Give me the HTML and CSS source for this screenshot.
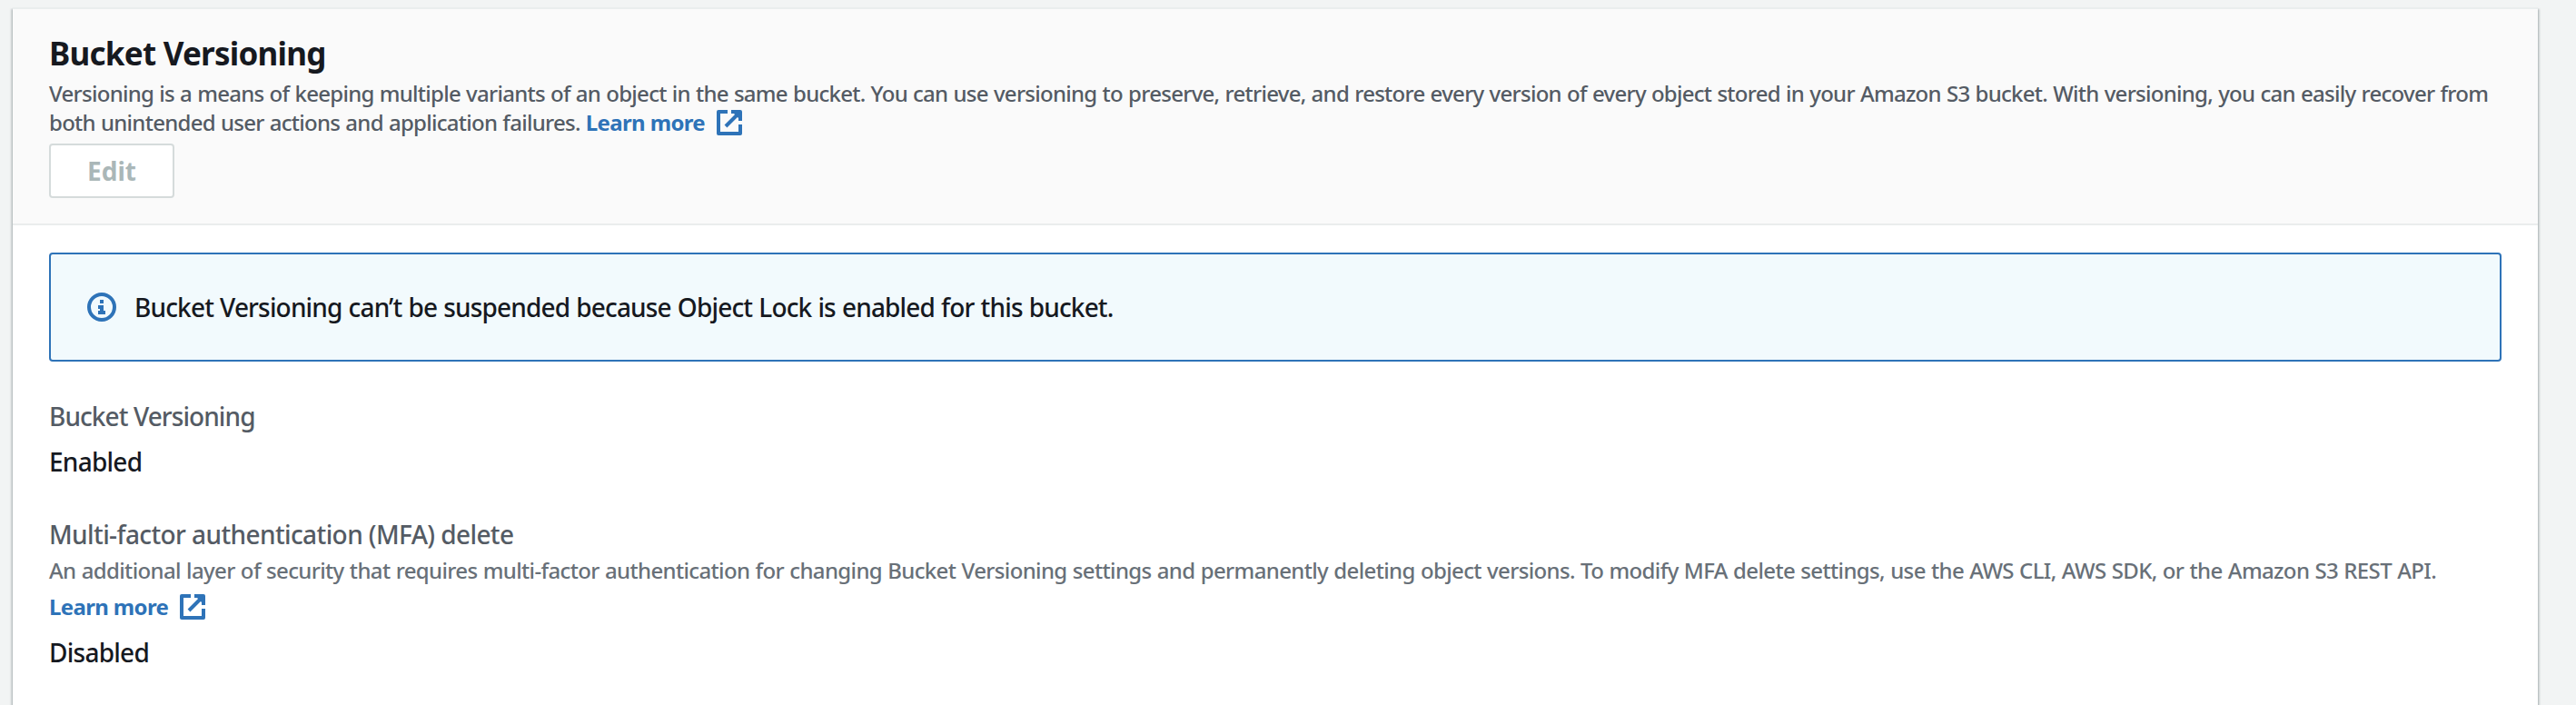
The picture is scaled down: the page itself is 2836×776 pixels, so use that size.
FILE: index.html
```html
<!DOCTYPE html>
<html lang="en">
<head>
<meta charset="utf-8">
<title>Bucket Versioning</title>
<link rel="stylesheet" href="styles.css">
</head>
<body>
<main class="panel">
  <header class="panel-header">
    <h2 class="title">Bucket Versioning</h2>
    <p class="description">Versioning is a means of keeping multiple variants of an object in the same bucket. You can use versioning to preserve, retrieve, and restore every version of every object stored in your Amazon S3 bucket. With versioning, you can easily recover from<br>both unintended user actions and application failures. <a class="link">Learn more<svg class="external" viewBox="0 0 28 28"><path d="M12 2H2V26H26V16"/><path d="M16 2H26V12M24 4L10 18"/><path class="head" d="M18 3h7v7z"/></svg></a></p>
    <button class="edit" disabled>Edit</button>
  </header>
  <section class="content">
    <div class="alert">
      <svg class="info" viewBox="0 0 32 32"><circle cx="16" cy="16" r="14"/><path d="M14 8h4v4h-4zM12 14h6v6h2v4h-8v-4h2v-2h-2z"/></svg>
      <p class="alert-text">Bucket Versioning can’t be suspended because Object Lock is enabled for this bucket.</p>
    </div>
    <dl class="details">
      <dt class="label">Bucket Versioning</dt>
      <dd class="value">Enabled</dd>
      <dt class="label mfa">Multi-factor authentication (MFA) delete</dt>
      <dd class="hint">An additional layer of security that requires multi-factor authentication for changing Bucket Versioning settings and permanently deleting object versions. To modify MFA delete settings, use the AWS CLI, AWS SDK, or the Amazon S3 REST API.</dd>
      <dd class="learn"><a class="link">Learn more<svg class="external" viewBox="0 0 28 28"><path d="M12 2H2V26H26V16"/><path d="M16 2H26V12M24 4L10 18"/><path class="head" d="M18 3h7v7z"/></svg></a></dd>
      <dd class="value">Disabled</dd>
    </dl>
  </section>
</main>
</body>
</html>
```
FILE: styles.css
```css
* { box-sizing: border-box; }
body {
  margin: 0;
  height: 776px;
  padding: 8px 42px 0 14px;
  overflow: hidden;
  background: #f2f4f4;
  color: #16191f;
  font-family: "Noto Sans", "Open Sans", sans-serif;
}
.panel {
  height: 790px;
  background: #fff;
  border-top: 2px solid #eaeded;
  box-shadow: 0 2px 2px 0 rgba(0, 28, 36, .3), 2px 2px 2px 0 rgba(0, 28, 36, .15), -2px 2px 2px 0 rgba(0, 28, 36, .15);
}
.panel-header {
  height: 238px;
  padding: 27px 40px 0;
  background: #fafafa;
  border-bottom: 2px solid #eaeded;
}
h2, p, dl, dd { margin: 0; }
.title { font-size: 35px; line-height: 44px; font-weight: 700; letter-spacing: -.76px; }
.description { margin-top: 6px; color: #545b64; font-size: 24px; line-height: 32px; font-weight: 500; letter-spacing: -.73px; word-spacing: .6px; white-space: nowrap; }
.link { color: #2e73b8; font-weight: 700; font-size: 24px; letter-spacing: -.65px; word-spacing: 0; }
.external { width: 28px; height: 28px; margin-left: 13px; vertical-align: -5px; border-radius: 2px; fill: none; stroke: currentColor; stroke-width: 4; }
.external .head { fill: currentColor; stroke: none; }
.edit {
  display: block;
  width: 138px;
  height: 60px;
  margin-top: 7px;
  padding: 0;
  border: 2px solid #d5dbdb;
  border-radius: 4px;
  background: #fff;
  color: #aab7b8;
  font: 700 28px/56px "Noto Sans", sans-serif;
}
.content { padding: 30px 40px; }
.alert {
  display: flex;
  align-items: center;
  gap: 20px;
  height: 120px;
  padding: 0 40px;
  border: 2px solid #2e73b8;
  border-radius: 4px;
  background: #f2fafd;
}
.info { width: 32px; height: 32px; fill: #2e73b8; }
.info circle { fill: none; stroke: #2e73b8; stroke-width: 4; }
.alert-text, .label, .value { font-size: 28px; line-height: 40px; font-weight: 500; }
.alert-text { letter-spacing: -.84px; word-spacing: .6px; }
.details { padding-top: 40px; }
.label { color: #545b64; letter-spacing: -.92px; }
.value { margin-top: 10px; letter-spacing: -.75px; }
.mfa { margin-top: 40px; letter-spacing: -.6px; }
.hint { color: #687078; font-size: 24px; line-height: 40px; font-weight: 500; letter-spacing: -.64px; word-spacing: .6px; white-space: nowrap; }
.learn { line-height: 40px; font-size: 24px; }
```
